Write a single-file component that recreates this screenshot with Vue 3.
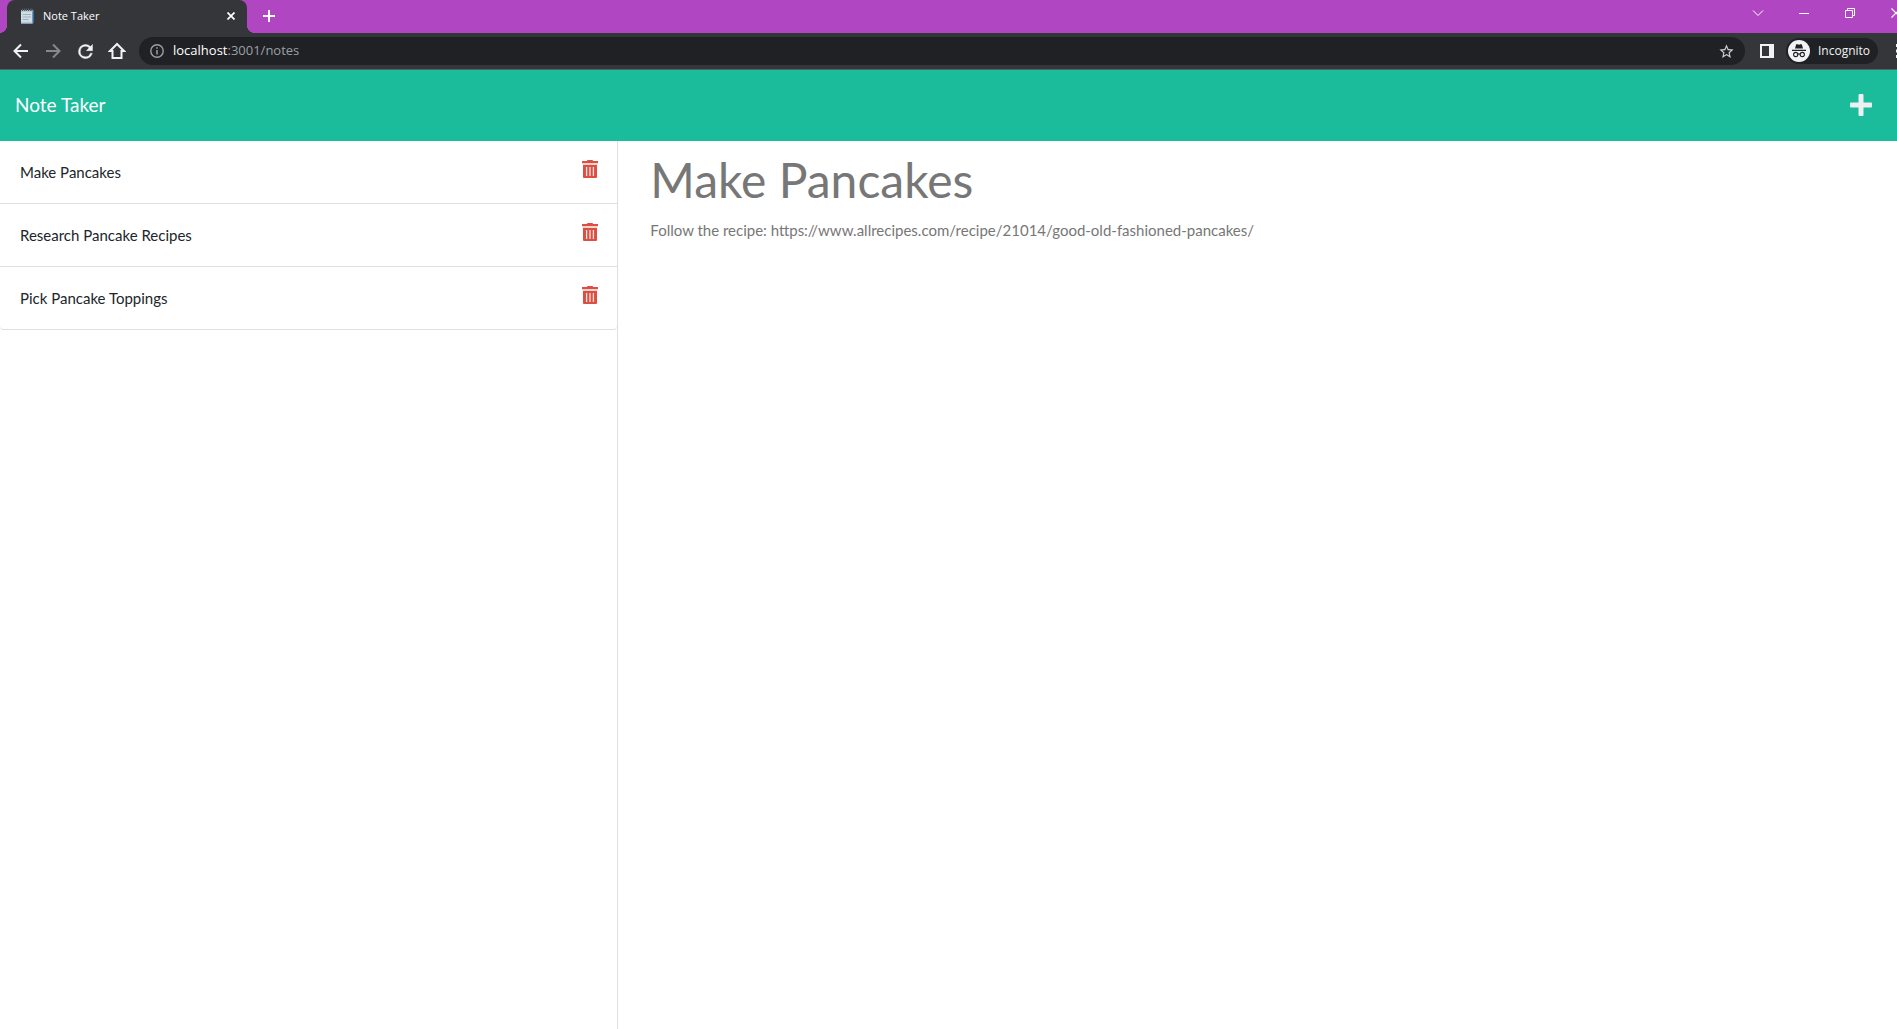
<script setup>
import { ref, computed } from 'vue'

const notes = ref([
  {
    id: 1,
    title: 'Make Pancakes',
    text: 'Follow the recipe: https://www.allrecipes.com/recipe/21014/good-old-fashioned-pancakes/'
  },
  { id: 2, title: 'Research Pancake Recipes', text: '' },
  { id: 3, title: 'Pick Pancake Toppings', text: '' }
])
const activeId = ref(1)
const active = computed(() => notes.value.find((n) => n.id === activeId.value) || { title: '', text: '' })

function remove(id) {
  notes.value = notes.value.filter((n) => n.id !== id)
}
</script>

<template>
  <div class="window">
    <div class="tabstrip">
      <div class="tab">
        <svg class="favicon" viewBox="0 0 14 16" width="14" height="16" aria-hidden="true">
          <path d="M1 2h11.500v13.500H1z" fill="#cfdde7" />
          <path d="M12 2h1.500v13L12 15.500z" fill="#5b9bd0" />
          <path d="M1 14.500h11.500v1H1z" fill="#8fb3cf" />
          <path d="M1 2h12v1.500H1z" fill="#9fb0bd" />
          <path d="M2.500 .5v2.500M4.500 .5v2.500M6.500 .5v2.500M8.500 .5v2.500M10.500 .5v2.500M12 .5v2.500" stroke="#56606a" stroke-width="1" />
          <path d="M2.500 6.500h8.500M2.500 9h8.500M2.500 11.500h6" stroke="#9fb0bd" stroke-width="1" />
        </svg>
        <span class="tab-title">Note Taker</span>
        <button class="tab-close" aria-label="Close tab">
          <svg viewBox="0 0 8 8" width="8" height="8"><path d="M.5 .5l7 7M7.500 .5l-7 7" stroke="#fff" stroke-width="1.700" /></svg>
        </button>
      </div>
      <button class="new-tab" aria-label="New tab">
        <svg viewBox="0 0 12 12" width="12" height="12"><path d="M6 0v12M0 6h12" stroke="#fff" stroke-width="2" /></svg>
      </button>
      <div class="window-controls">
        <button aria-label="Search tabs">
          <svg viewBox="0 0 12 12" width="12" height="12"><path d="M1 3.500l5 5 5-5" fill="none" stroke="#fff" /></svg>
        </button>
        <button aria-label="Minimize">
          <svg viewBox="0 0 10 10" width="10" height="10"><path d="M0 5.500h10" stroke="#fff" /></svg>
        </button>
        <button aria-label="Restore">
          <svg viewBox="0 0 10 10" width="10" height="10"><path d="M.5 2.500h7v7h-7zM2.500 2.500v-2h7v7h-2" fill="none" stroke="#fff" /></svg>
        </button>
        <button aria-label="Close">
          <svg viewBox="0 0 10 10" width="10" height="10"><path d="M.5 .5l9 9M9.500 .5l-9 9" stroke="#fff" stroke-width="1.200" /></svg>
        </button>
      </div>
    </div>

    <div class="toolbar">
      <button class="tool" aria-label="Back">
        <svg viewBox="0 0 16 16" width="16" height="16"><path d="M15 8H2M8 1.500L1.500 8 8 14.500" fill="none" stroke="#f1f3f4" stroke-width="2" /></svg>
      </button>
      <button class="tool" aria-label="Forward">
        <svg viewBox="0 0 16 16" width="16" height="16"><path d="M1 8h13M8 1.500L14.500 8 8 14.500" fill="none" stroke="#86888a" stroke-width="2" /></svg>
      </button>
      <button class="tool" aria-label="Reload">
        <svg viewBox="0 0 24 24" width="21" height="21"><path d="M17.650 6.350A7.958 7.958 0 0 0 12 4a8 8 0 1 0 7.730 10h-2.080A6 6 0 1 1 12 6c1.660 0 3.140.69 4.220 1.780L13 11h7V4z" fill="#f1f3f4" stroke="#f1f3f4" stroke-width=".5" /></svg>
      </button>
      <button class="tool" aria-label="Home">
        <svg viewBox="0 0 18 18" width="18" height="18"><path d="M9 2L2 9H4.500V16h9V9H16z" fill="none" stroke="#f1f3f4" stroke-width="2" /></svg>
      </button>
      <div class="omnibox">
        <svg viewBox="0 0 14 14" width="14" height="14" aria-hidden="true">
          <circle cx="7" cy="7" r="6.200" fill="none" stroke="#9aa0a6" stroke-width="1.400" />
          <path d="M7 6v4.500M7 3.300v1.500" stroke="#9aa0a6" stroke-width="1.500" />
        </svg>
        <span class="url"><b>localhost</b>:3001/notes</span>
        <button class="star" aria-label="Bookmark this tab">
          <svg viewBox="0 0 24 24" width="17" height="17"><path d="M22 9.240l-7.190-.62L12 2 9.190 8.630 2 9.240l5.460 4.730L5.820 21 12 17.270 18.180 21l-1.630-7.030zM12 15.400l-3.760 2.270 1-4.280-3.320-2.880 4.380-.38L12 6.100l1.710 4.040 4.380.38-3.320 2.880 1 4.280z" fill="#d0d2d5" /></svg>
        </button>
      </div>
      <button class="side-panel" aria-label="Side panel">
        <svg viewBox="0 0 14 14" width="14" height="14"><path d="M0 0h14v14H0z" fill="#f1f3f4" /><path d="M2 2h7v10H2z" fill="#35363a" /></svg>
      </button>
      <button class="profile">
        <svg viewBox="0 0 22 22" width="22" height="22" aria-hidden="true">
          <circle cx="11" cy="11" r="11" fill="#f1f3f4" />
          <path d="M8.200 4.200h1.300l1.500.5 1.500-.5h1.300L15 8.500H7zM4 9.800h14v1.200H4z" fill="#202124" />
          <g fill="none" stroke="#202124" stroke-width="1.100">
            <circle cx="7.700" cy="14.500" r="2.100" />
            <circle cx="14.300" cy="14.500" r="2.100" />
            <path d="M9.900 14.300q1.100-.8 2.200 0" />
          </g>
        </svg>
        <span>Incognito</span>
      </button>
      <button class="menu" aria-label="Menu">
        <svg viewBox="0 0 4 14" width="4" height="14"><path d="M0 0h4v3H0zM0 5.500h4v3H0zM0 11h4v3H0z" fill="#f1f3f4" /></svg>
      </button>
    </div>

    <header class="navbar">
      <a class="brand" href="/">Note Taker</a>
      <button class="add" aria-label="New note" @click="activeId = 0">
        <svg viewBox="0 0 22 22" width="22" height="22"><path d="M9.500 0h3q1 0 1 1v7.500H21q1 0 1 1v3q0 1-1 1h-7.500V21q0 1-1 1h-3q-1 0-1-1v-7.500H1q-1 0-1-1v-3q0-1 1-1h7.500V1q0-1 1-1z" fill="#ecf0f1" /></svg>
      </button>
    </header>

    <div class="content">
      <aside class="sidebar">
        <ul class="notes">
          <li v-for="note in notes" :key="note.id" class="note">
            <button class="note-title" @click="activeId = note.id">{{ note.title }}</button>
            <button class="trash" :aria-label="'Delete ' + note.title" @click="remove(note.id)">
              <svg viewBox="0 0 16 18" width="16" height="18">
                <path d="M5.500 0h5l.7 1H16v2.200H0V1h4.800z" fill="#dd4f43" />
                <path d="M1 4.800h14V17q0 1-1 1H2q-1 0-1-1z" fill="#dd4f43" />
                <path d="M4.600 7v9M8 7v9M11.400 7v9" stroke="#f9e3e0" stroke-width="1.300" />
              </svg>
            </button>
          </li>
        </ul>
      </aside>
      <main class="editor">
        <input class="title-field" type="text" aria-label="Note title" readonly :value="active.title" />
        <textarea class="text-field" aria-label="Note text" readonly :value="active.text"></textarea>
      </main>
    </div>
  </div>
</template>

<style>
body {
  margin: 0;
  background: #fff;
}
</style>

<style scoped>
* {
  box-sizing: border-box;
}
button {
  margin: 0;
  padding: 0;
  border: 0;
  background: none;
  font: inherit;
  color: inherit;
  cursor: pointer;
}
svg {
  display: block;
}
.window {
  display: flex;
  flex-direction: column;
  min-height: 100vh;
  overflow: hidden;
  font-family: Lato, sans-serif;
  font-size: 15px;
  line-height: 1.5;
}
.tabstrip {
  display: flex;
  height: 33px;
  padding-left: 7px;
  background: #b146c2;
  font-family: "Open Sans", "Noto Sans", sans-serif;
}
.tab {
  position: relative;
  display: flex;
  align-items: center;
  width: 240px;
  padding: 0 12px 1px 13px;
  border-radius: 8px 8px 0 0;
  background: #35363a;
  color: #fff;
  font-size: 11px;
}
.tab::before,
.tab::after {
  content: "";
  position: absolute;
  bottom: 0;
  width: 8px;
  height: 8px;
}
.tab::before {
  right: 100%;
  background: radial-gradient(circle at 0 0, transparent 8px, #35363a 8px);
}
.tab::after {
  left: 100%;
  background: radial-gradient(circle at 100% 0, transparent 8px, #35363a 8px);
}
.tab-title {
  flex: 1;
  margin-left: 9px;
}
.tab-close,
.new-tab,
.window-controls button,
.tool {
  display: flex;
  align-items: center;
  justify-content: center;
}
.tab-close {
  width: 8px;
}
.new-tab {
  width: 44px;
  padding-bottom: 1px;
}
.window-controls {
  display: flex;
  margin-left: auto;
  margin-right: -22px;
}
.window-controls button {
  width: 46px;
  height: 26px;
}
.toolbar {
  display: flex;
  align-items: center;
  height: 37px;
  padding-left: 5px;
  margin-right: -3px;
  border-bottom: 1px solid #56605f;
  background: #35363a;
  color: #f1f3f4;
  font-family: "Open Sans", "Noto Sans", sans-serif;
  font-size: 12px;
}
.tool {
  width: 32px;
  height: 32px;
}
.omnibox {
  flex: 1;
  display: flex;
  align-items: center;
  height: 28px;
  margin-left: 6px;
  padding: 0 10px 0 11px;
  border-radius: 14px;
  background: #202124;
}
.url {
  flex: 1;
  margin-left: 9px;
  color: #9aa0a6;
  font-size: 13px;
}
.url b {
  color: #fff;
  font-weight: 400;
}
.side-panel {
  margin-left: 15px;
}
.profile {
  display: flex;
  align-items: center;
  gap: 8px;
  width: 92px;
  height: 26px;
  margin: 0 18px 0 12px;
  padding-left: 2px;
  border-radius: 13px;
  background: #202124;
}
.navbar {
  display: flex;
  align-items: center;
  justify-content: space-between;
  padding: 21px 25px 22px 15px;
  background: #1abc9c;
}
.brand {
  color: #fff;
  font-size: 19px;
  line-height: 28px;
  text-decoration: none;
}
.content {
  flex: 1;
  display: flex;
}
.sidebar {
  flex: 0 0 calc(100% / 3 - 14px);
  border-right: 1px solid #dfdfdf;
}
.notes {
  margin: 0;
  padding: 0;
  list-style: none;
}
.note {
  display: flex;
  align-items: flex-start;
  padding: 19px 19px 19px 20px;
  border-bottom: 1px solid #dfdfdf;
}
.note:last-child {
  border-radius: 0 0 4px 4px;
}
.note-title {
  flex: 1;
  color: #212529;
  line-height: 24px;
  text-align: left;
}
.editor {
  flex: 1;
  display: flex;
  flex-direction: column;
  gap: 2px;
  padding: 0 30px 0 32px;
}
.title-field,
.text-field {
  width: 100%;
  margin: 0;
  padding: 0;
  border: 0;
  outline: 0;
  background: none;
  color: #777;
  font-family: inherit;
}
.title-field {
  height: 76px;
  font-size: 48px;
}
.text-field {
  flex: 1;
  font-size: 15px;
  line-height: 23px;
  resize: none;
}
</style>
